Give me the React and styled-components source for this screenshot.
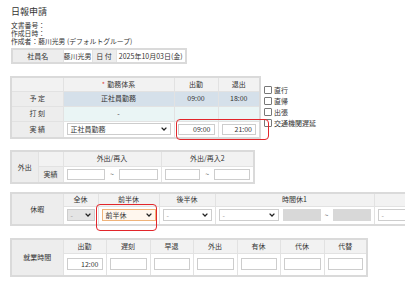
import React from 'react'
import styled, { createGlobalStyle } from 'styled-components'

const GlobalStyle = createGlobalStyle`
  html, body { margin: 0; padding: 0; background: #fff; }
  body {
    font-family: "Noto Sans CJK JP", "Noto Sans", sans-serif;
    color: #333;
    font-size: 7px;
  }
`

const Page = styled.div`
  width: 405px;
  height: 282px;
  overflow: hidden;
  box-sizing: border-box;
  padding: 6px 0 0 10px;
`

const Title = styled.div`
  font-size: 9px;
  line-height: 12px;
  margin-left: 1px;
`

const Meta = styled.div`
  margin: 3px 0 0 1px;
  line-height: 8px;
  font-size: 6.8px;
`

const Section = styled.div`
  position: relative;
  display: flex;
  align-items: flex-start;
  margin-top: ${p => p.$top}px;
  margin-left: ${p => p.$left || 0}px;
`

const Grid = styled.table`
  border-collapse: collapse;
  table-layout: fixed;
  width: ${p => p.$w}px;
  border: 2px solid #dadada;
  flex-shrink: 0;
`

const Col = styled.col`
  width: ${p => p.$w}px;
`

const Row = styled.tr`
  height: ${p => p.$h}px;
`

const Cell = styled.td`
  border: 1px solid #e2e2e2;
  padding: 0 ${p => (p.$tight ? 0 : 3)}px;
  text-align: ${p => p.$align || 'center'};
  vertical-align: middle;
  background: ${p => p.$bg || '#fff'};
  white-space: nowrap;
  overflow: hidden;
  font-size: 7px;
  line-height: 9px;
`

const Head = styled(Cell).attrs({ as: 'th' })`
  font-weight: normal;
  background: ${p => p.$bg || '#f2f2f2'};
`

const Label = styled(Cell)`
  background: #ededed;
`

const Req = styled.span`
  color: #e0443a;
  margin-right: 2px;
`

const Select = styled.div`
  display: flex;
  align-items: center;
  justify-content: space-between;
  height: ${p => p.$h || 12}px;
  box-sizing: border-box;
  border: 1px solid ${p => (p.$focus ? '#efb37a' : '#cdcdcd')};
  background: ${p => (p.$muted ? '#e4e4e4' : p.$focus ? '#fff7ee' : '#fff')};
  padding: 0 3px 0 3px;
  text-align: left;
  color: ${p => (p.$dim ? '#999' : '#333')};
  svg { flex-shrink: 0; }
`

const Field = styled.div`
  height: ${p => p.$h || 11}px;
  box-sizing: border-box;
  border: 1px solid #cdcdcd;
  background: ${p => (p.$gray ? '#d8d8d8' : '#fff')};
  border-color: ${p => (p.$gray ? '#d8d8d8' : '#cdcdcd')};
  text-align: right;
  padding: 0 3px;
  line-height: ${p => (p.$h || 11) - 2}px;
  width: ${p => (p.$w ? p.$w + 'px' : 'auto')};
  flex: ${p => (p.$w ? 'none' : '1')};
`

const Range = styled.div`
  display: flex;
  align-items: center;
  gap: ${p => p.$gap || 5}px;
  color: #666;
`

const Checks = styled.div`
  display: flex;
  flex-direction: column;
  gap: 3px;
  margin: 10px 0 0 3px;
`

const Check = styled.label`
  display: flex;
  align-items: center;
  gap: 2px;
  line-height: 8px;
  &::before {
    content: '';
    width: 6px;
    height: 6px;
    border: 1px solid #777;
    border-radius: 1px;
    background: #fff;
  }
`

const Mark = styled.div`
  position: absolute;
  left: ${p => p.$x}px;
  top: ${p => p.$y}px;
  width: ${p => p.$w}px;
  height: ${p => p.$h}px;
  border: 1.5px solid #e2262b;
  border-radius: 4px;
  box-sizing: border-box;
  pointer-events: none;
`

const Chevron = () => (
  <svg width="6" height="4" viewBox="0 0 6 4">
    <polyline points="0.6,0.6 3,3 5.4,0.6" fill="none" stroke="#222" strokeWidth="1.3" />
  </svg>
)

const Drop = ({ children, ...rest }) => (
  <Select {...rest}>
    <span>{children}</span>
    <Chevron />
  </Select>
)

const workCols = ['出勤', '遅刻', '早退', '外出', '有休', '代休', '代替']

export default function App() {
  return (
    <Page>
      <GlobalStyle />
      <Title>日報申請</Title>
      <Meta>
        <div>文書番号：</div>
        <div>作成日時：</div>
        <div>作成者：藤川光男 (デフォルトグループ)</div>
      </Meta>

      <Section $top={3} $left={1}>
        <Grid $w={174}>
          <colgroup>
            <Col $w={51} /><Col $w={29} /><Col $w={24} /><Col $w={70} />
          </colgroup>
          <tbody>
            <Row $h={14}>
              <Label>社員名</Label>
              <Cell $tight>藤川光男</Cell>
              <Label $tight>日 付</Label>
              <Cell $tight>2025年10月03日(金)</Cell>
            </Row>
          </tbody>
        </Grid>
      </Section>

      <Section $top={12}>
        <Grid $w={249}>
          <colgroup>
            <Col $w={52} /><Col $w={111} /><Col $w={44} /><Col $w={42} />
          </colgroup>
          <tbody>
            <Row $h={14}>
              <Head />
              <Head><Req>*</Req>勤務体系</Head>
              <Head>出勤</Head>
              <Head>退出</Head>
            </Row>
            <Row $h={15}>
              <Label>予 定</Label>
              <Cell $bg="#d5e0ea">正社員勤務</Cell>
              <Cell $bg="#d5e0ea">09:00</Cell>
              <Cell $bg="#d5e0ea">18:00</Cell>
            </Row>
            <Row $h={15}>
              <Label>打 刻</Label>
              <Cell $bg="#eaf5f5">-</Cell>
              <Cell $bg="#eaf5f5" />
              <Cell $bg="#eaf5f5" />
            </Row>
            <Row $h={17}>
              <Label>実 績</Label>
              <Cell><Drop $h={12}>正社員勤務</Drop></Cell>
              <Cell><Field>09:00</Field></Cell>
              <Cell><Field>21:00</Field></Cell>
            </Row>
          </tbody>
        </Grid>
        <Checks>
          <Check>直行</Check>
          <Check>直帰</Check>
          <Check>出張</Check>
          <Check>交通機関遅延</Check>
        </Checks>
        <Mark $x={166} $y={43} $w={93} $h={21} />
      </Section>

      <Section $top={11}>
        <Grid $w={243}>
          <colgroup>
            <Col $w={27} /><Col $w={25} /><Col $w={98} /><Col $w={93} />
          </colgroup>
          <tbody>
            <Row $h={15}>
              <Label rowSpan={2}>外出</Label>
              <Head />
              <Head>外出/再入</Head>
              <Head>外出/再入2</Head>
            </Row>
            <Row $h={17}>
              <Label>実績</Label>
              <Cell>
                <Range><Field /><span>~</span><Field /></Range>
              </Cell>
              <Cell>
                <Range><Field /><span>~</span><Field /></Range>
              </Cell>
            </Row>
          </tbody>
        </Grid>
      </Section>

      <Section $top={8}>
        <Grid $w={430}>
          <colgroup>
            <Col $w={52} /><Col $w={35} /><Col $w={61} /><Col $w={56} /><Col $w={159} /><Col $w={67} />
          </colgroup>
          <tbody>
            <Row $h={13}>
              <Label rowSpan={2}>休暇</Label>
              <Head>全休</Head>
              <Head>前半休</Head>
              <Head>後半休</Head>
              <Head>時間休1</Head>
              <Head />
            </Row>
            <Row $h={19}>
              <Cell><Drop $muted $dim>-</Drop></Cell>
              <Cell><Drop $focus>前半休</Drop></Cell>
              <Cell><Drop $dim>-</Drop></Cell>
              <Cell>
                <Range $gap={4}>
                  <Drop $dim style={{ width: 63 }}>-</Drop>
                  <Field $gray $w={38} $h={12} />
                  <span>~</span>
                  <Field $gray $w={38} $h={12} />
                </Range>
              </Cell>
              <Cell><Drop $dim>-</Drop></Cell>
            </Row>
          </tbody>
        </Grid>
        <Mark $x={86} $y={12} $w={61} $h={27} />
      </Section>

      <Section $top={12}>
        <Grid $w={356}>
          <colgroup>
            <Col $w={52} />
            {workCols.map((c, i) => <Col key={i} $w={i % 2 ? 44 : 43} />)}
          </colgroup>
          <tbody>
            <Row $h={14}>
              <Label rowSpan={2}>就業時間</Label>
              {workCols.map(c => <Head key={c}>{c}</Head>)}
            </Row>
            <Row $h={23}>
              {workCols.map((c, i) => (
                <Cell key={c}><Field $h={12}>{i === 0 ? '12:00' : ''}</Field></Cell>
              ))}
            </Row>
          </tbody>
        </Grid>
      </Section>
    </Page>
  )
}
